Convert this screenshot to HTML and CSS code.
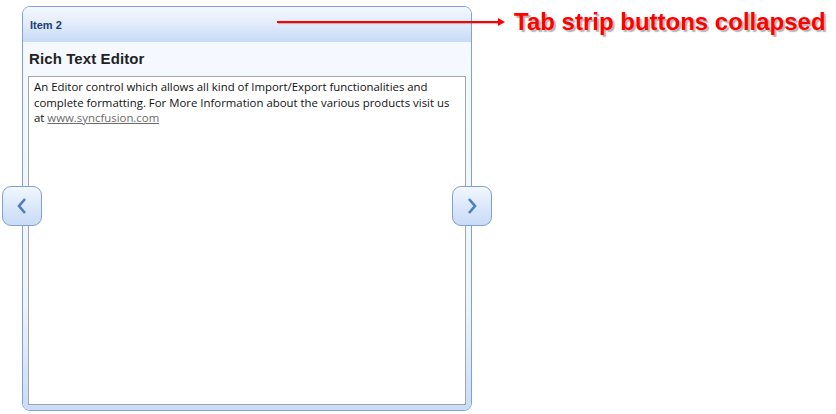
FILE: index.html
```html
<!DOCTYPE html>
<html>
<head>
<meta charset="utf-8">
<link rel="stylesheet" href="styles.css">
</head>
<body>
<div class="stage">
  <div class="panel">
    <div class="panel-header">Item 2</div>
    <div class="panel-body">
      <div class="title">Rich Text Editor</div>
      <div class="editor">An Editor control which allows all kind of Import/Export functionalities and complete formatting. For More Information about the various products visit us at <a href="#">www.syncfusion.com</a></div>
    </div>
  </div>
  <div class="nav nav-left"><svg width="14" height="18" viewBox="0 0 14 18"><path d="M10 2 L4 9 L10 16" fill="none" stroke="#4d7fc0" stroke-width="2.6" stroke-linejoin="miter"/></svg></div>
  <div class="nav nav-right"><svg width="14" height="18" viewBox="0 0 14 18"><path d="M4 2 L10 9 L4 16" fill="none" stroke="#4d7fc0" stroke-width="2.6" stroke-linejoin="miter"/></svg></div>
  <div class="callout">
    <div class="arrow"></div>
    <div class="callout-text">Tab strip buttons collapsed</div>
  </div>
</div>
</body>
</html>
```
FILE: styles.css
```css
html, body {
  margin: 0;
  padding: 0;
  background: #ffffff;
}
.stage {
  position: relative;
  width: 836px;
  height: 414px;
  padding: 6px 0 0 22px;
  box-sizing: border-box;
}
.panel {
  width: 450px;
  height: 405px;
  box-sizing: border-box;
  border: 1px solid #7ea2d4;
  border-radius: 8px;
  overflow: hidden;
  display: flex;
  flex-direction: column;
  font-family: "Liberation Sans", Arial, sans-serif;
}
.panel-header {
  height: 35px;
  flex: none;
  box-sizing: border-box;
  padding: 12px 0 0 7px;
  background: linear-gradient(#f4f8fe, #e4edfb 45%, #c6daf7);
  color: #203e78;
  font-weight: bold;
  font-size: 11px;
}
.panel-body {
  flex: 1;
  display: flex;
  flex-direction: column;
  padding: 8px 5px 5px 5px;
  background: linear-gradient(#f5f9ff 0%, #eff5fd 70%, #c9dcf8 100%);
}
.title {
  font-size: 15px;
  font-weight: bold;
  color: #222222;
  height: 26px;
  padding-left: 1px;
  letter-spacing: 0.1px;
}
.editor {
  flex: 1;
  background: #ffffff;
  border: 1px solid #a5a5a5;
  padding: 2px 5px;
  font-family: "Open Sans", "Liberation Sans", sans-serif;
  font-size: 11.4px;
  line-height: 15.5px;
  color: #111111;
  letter-spacing: 0;
}
.editor a {
  color: #6b6b6b;
  text-decoration: underline;
}
.nav {
  position: absolute;
  top: 186px;
  width: 40px;
  height: 40px;
  box-sizing: border-box;
  border: 1px solid #7ea3d3;
  border-radius: 9px;
  background: linear-gradient(#f3f7fe, #dce8fb 50%, #c8dbf7);
  display: flex;
  align-items: center;
  justify-content: center;
}
.nav-left { left: 2px; }
.nav-right { left: 452px; }
.callout {
  position: absolute;
  left: 277px;
  top: 8px;
  display: flex;
  align-items: center;
}
.arrow {
  position: relative;
  width: 222px;
  height: 2px;
  background: #ff0000;
  box-shadow: 1px 1px 1px rgba(120, 120, 120, 0.5);
  margin-right: 15px;
}
.arrow::after {
  content: "";
  position: absolute;
  right: -6px;
  top: -3px;
  border-left: 7px solid #ff0000;
  border-top: 4px solid transparent;
  border-bottom: 4px solid transparent;
}
.callout-text {
  font-family: "Liberation Sans", Arial, sans-serif;
  font-weight: bold;
  font-size: 24px;
  line-height: 28px;
  color: #ff0000;
  text-shadow: 2px 2px 1px #b5b5b5;
  white-space: nowrap;
}
```
